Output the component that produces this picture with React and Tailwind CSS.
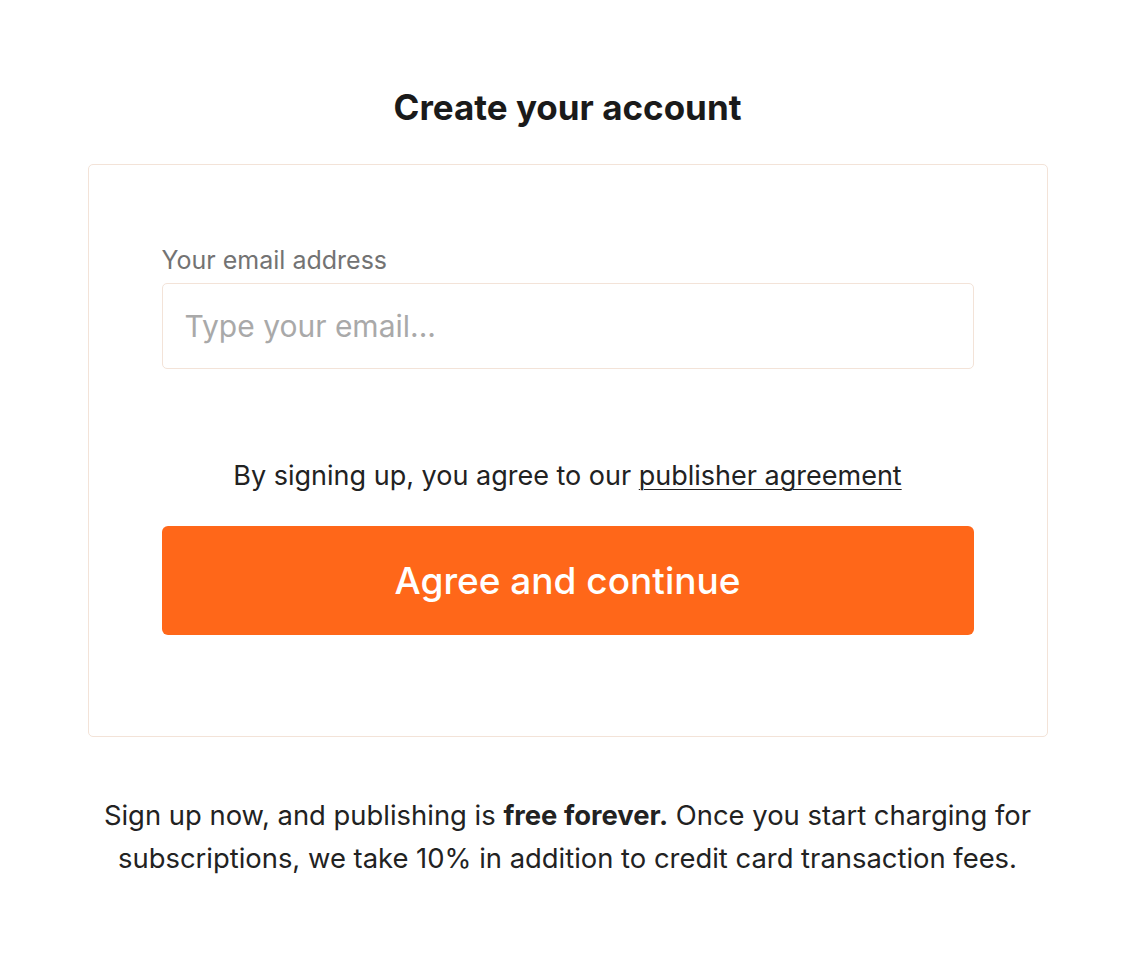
import React from 'react';

const App = () => (
  <div className="min-h-screen bg-white font-['Inter',sans-serif] text-[#222] pt-[87px] pl-[5px]">
    <h1 className="text-center text-[35px] leading-[40px] font-bold text-[#1a1a1a]">Create your account</h1>

    <div className="mx-auto mt-[37px] w-[960px] rounded-[5px] border border-[#f3e3d8] px-[73px] pt-[81px] pb-[101px]">
      <label className="block text-[25px] leading-[28px] text-[#737373]">Your email address</label>
      <input
        type="email"
        placeholder="Type your email..."
        className="mt-[9px] block h-[86px] w-full rounded-[5px] border border-[#f3e3d8] px-[22px] text-[30px] outline-none placeholder:text-[#a9a9a9]"
      />

      <p className="mt-[91px] text-center text-[27px] leading-[32px] text-[#222]">
        By signing up, you agree to our{' '}
        <a href="#" className="underline underline-offset-[4px] decoration-1">publisher agreement</a>
      </p>

      <button className="mt-[34px] h-[109px] w-full rounded-[6px] bg-[#ff6719] text-[37px] font-medium text-white">
        Agree and continue
      </button>
    </div>

    <p className="mx-auto mt-[57px] w-[1000px] text-center text-[27.4px] leading-[43px] text-[#222]">
      Sign up now, and publishing is <strong className="font-bold">free forever.</strong> Once you start charging for
      <br />
      subscriptions, we take 10% in addition to credit card transaction fees.
    </p>
  </div>
);

export default App;
